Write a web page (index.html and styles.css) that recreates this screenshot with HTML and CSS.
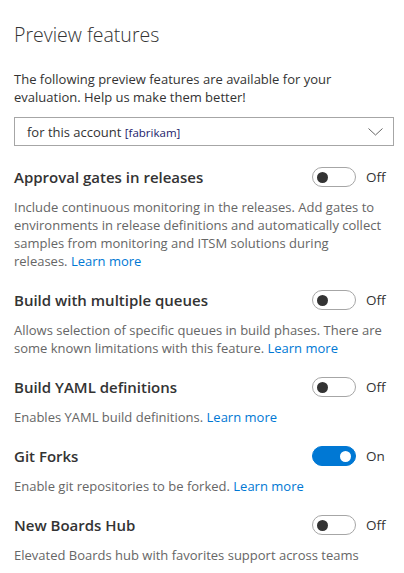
FILE: index.html
```html
<!DOCTYPE html>
<html lang="en">
<head>
<meta charset="utf-8">
<title>Preview features</title>
<link rel="stylesheet" href="styles.css">
</head>
<body>
<div class="panel">
  <h1 class="title">Preview features</h1>
  <p class="intro">The following preview features are available for your evaluation. Help us make them better!</p>
  <div class="select">
    <span class="select-text">for this account <span class="account">[fabrikam]</span></span>
    <svg class="chevron" width="15" height="8" viewBox="0 0 15 8"><path d="M0.5 0.5 L7.5 7 L14.5 0.5" fill="none" stroke="#666" stroke-width="1"/></svg>
  </div>

  <div class="feature">
    <div class="feature-head">
      <span class="feature-name">Approval gates in releases</span>
      <span class="toggle-wrap"><span class="toggle"><span class="knob"></span></span><span class="state">Off</span></span>
    </div>
    <p class="desc">Include continuous monitoring in the releases. Add gates to environments in release definitions and automatically collect samples from monitoring and ITSM solutions during<br>releases. <a class="link" href="#">Learn more</a></p>
  </div>

  <div class="feature">
    <div class="feature-head">
      <span class="feature-name">Build with multiple queues</span>
      <span class="toggle-wrap"><span class="toggle"><span class="knob"></span></span><span class="state">Off</span></span>
    </div>
    <p class="desc">Allows selection of specific queues in build phases. There are some known limitations with this feature. <a class="link" href="#">Learn more</a></p>
  </div>

  <div class="feature">
    <div class="feature-head">
      <span class="feature-name">Build YAML definitions</span>
      <span class="toggle-wrap"><span class="toggle"><span class="knob"></span></span><span class="state">Off</span></span>
    </div>
    <p class="desc">Enables YAML build definitions. <a class="link" href="#">Learn more</a></p>
  </div>

  <div class="feature">
    <div class="feature-head">
      <span class="feature-name">Git Forks</span>
      <span class="toggle-wrap"><span class="toggle on"><span class="knob"></span></span><span class="state">On</span></span>
    </div>
    <p class="desc">Enable git repositories to be forked. <a class="link" href="#">Learn more</a></p>
  </div>

  <div class="feature">
    <div class="feature-head">
      <span class="feature-name">New Boards Hub</span>
      <span class="toggle-wrap"><span class="toggle"><span class="knob"></span></span><span class="state">Off</span></span>
    </div>
    <p class="desc">Elevated Boards hub with favorites support across teams</p>
  </div>
</div>
</body>
</html>
```

FILE: styles.css
```css
html, body {
  margin: 0;
  padding: 0;
  background: #ffffff;
}
body {
  font-family: "Open Sans", "Noto Sans", sans-serif;
  color: #333333;
  overflow: hidden;
}
.panel {
  padding: 21px 10px 0 14px;
}
.title {
  margin: 0;
  font-size: 19.5px;
  font-weight: 300;
  line-height: 28px;
  color: #333333;
}
.intro {
  margin: 21px 0 0 0;
  font-size: 13px;
  line-height: 18px;
  color: #333333;
}
.select {
  margin-top: 11px;
  height: 29px;
  box-sizing: border-box;
  border: 1px solid #a6a6a6;
  display: flex;
  align-items: center;
  justify-content: space-between;
  padding: 0 10px 0 12px;
}
.select-text {
  font-size: 13px;
  color: #333333;
}
.account {
  font-size: 11.5px;
  color: #22226b;
}
.chevron {
  display: block;
}
.feature {
  margin-top: 21px;
}
.feature + .feature {
  margin-top: 20px;
}
.feature-head {
  display: flex;
  align-items: center;
  justify-content: space-between;
  height: 20px;
}
.feature-name {
  font-size: 15px;
  font-weight: 600;
  color: #333333;
}
.toggle-wrap {
  display: flex;
  align-items: center;
  gap: 10px;
  width: 82px;
}
.toggle {
  width: 44px;
  height: 20px;
  box-sizing: border-box;
  border: 1px solid #a6a6a6;
  border-radius: 10px;
  display: flex;
  align-items: center;
  padding: 0 4px;
}
.knob {
  width: 11px;
  height: 11px;
  border-radius: 50%;
  background: #333333;
}
.toggle.on {
  background: #0078d4;
  border-color: #0078d4;
  justify-content: flex-end;
}
.toggle.on .knob {
  background: #ffffff;
}
.state {
  font-size: 13.5px;
  color: #333333;
}
.desc {
  margin: 11px 0 0 0;
  font-size: 13px;
  line-height: 18px;
  color: #666666;
}
.link {
  color: #0078d4;
  text-decoration: none;
}
```
